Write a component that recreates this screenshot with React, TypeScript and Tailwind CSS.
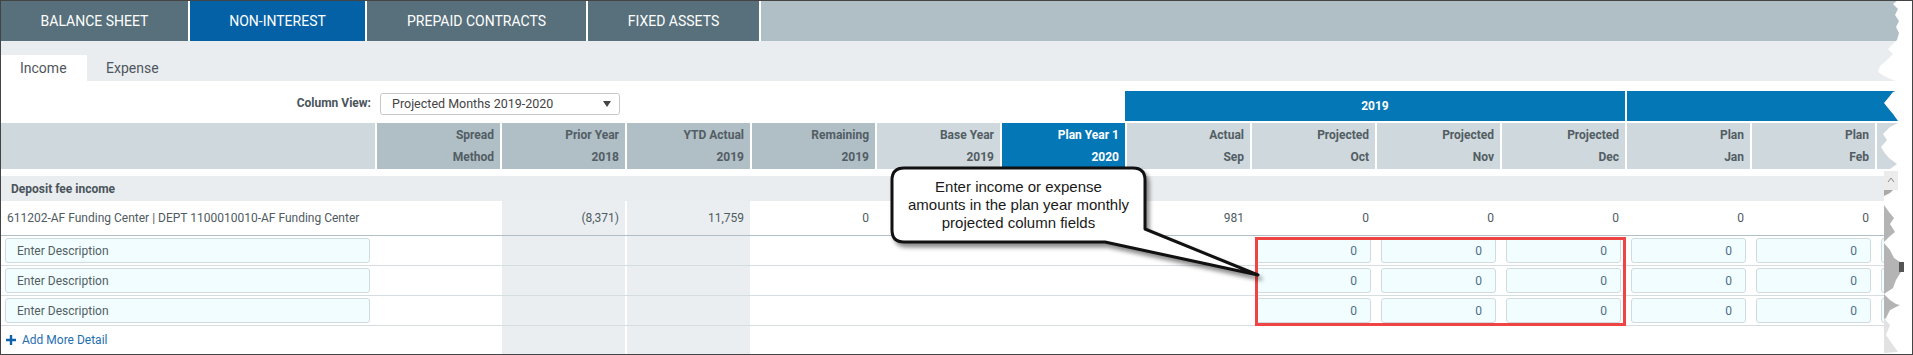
import React from 'react';

const grid = 'grid grid-cols-[374px_repeat(12,125px)_1fr]';

const heads = [
  { a: 'Spread', b: 'Method', cls: 'bg-[#b0bec5] text-[#525d64]' },
  { a: 'Prior Year', b: '2018', cls: 'bg-[#b0bec5] text-[#525d64]' },
  { a: 'YTD Actual', b: '2019', cls: 'bg-[#b0bec5] text-[#525d64]' },
  { a: 'Remaining', b: '2019', cls: 'bg-[#b0bec5] text-[#525d64]' },
  { a: 'Base Year', b: '2019', cls: 'bg-[#cfd8dc] text-[#525d64]' },
  { a: 'Plan Year 1', b: '2020', cls: 'bg-[#0477b6] text-white' },
  { a: 'Actual', b: 'Sep', cls: 'bg-[#cfd8dc] text-[#525d64]' },
  { a: 'Projected', b: 'Oct', cls: 'bg-[#cfd8dc] text-[#525d64]' },
  { a: 'Projected', b: 'Nov', cls: 'bg-[#cfd8dc] text-[#525d64]' },
  { a: 'Projected', b: 'Dec', cls: 'bg-[#cfd8dc] text-[#525d64]' },
  { a: 'Plan', b: 'Jan', cls: 'bg-[#cfd8dc] text-[#525d64]' },
  { a: 'Plan', b: 'Feb', cls: 'bg-[#cfd8dc] text-[#525d64]' },
];

const accountValues = ['', '(8,371)', '11,759', '0', '', '', '981', '0', '0', '0', '0', '0'];

// columns 1 and 2 (prior year, ytd actual) are shaded in the body
const shade = (i: number) => (i === 1 || i === 2 ? 'bg-[#eaeef0]' : 'bg-white');

const tabs = [
  { label: 'BALANCE SHEET', w: 'w-[187px]', bg: 'bg-[#57707b]' },
  { label: 'NON-INTEREST', w: 'w-[175px]', bg: 'bg-[#0561a6]' },
  { label: 'PREPAID CONTRACTS', w: 'w-[219px]', bg: 'bg-[#57707b]' },
  { label: 'FIXED ASSETS', w: 'w-[171px]', bg: 'bg-[#57707b]' },
];

function AmountInput() {
  return (
    <input
      readOnly
      defaultValue="0"
      className="mt-[2px] h-[25px] w-full rounded-[3px] border border-[#cfdbdf] bg-[#f1fdfe] pr-[13px] text-right text-[12px] text-[#4e6f88] outline-none"
    />
  );
}

function DetailRow() {
  return (
    <div className={`${grid} h-[30px] border-b border-[#d5dde0]`}>
      <div className="pl-[4px] pr-[4px]">
        <input
          readOnly
          defaultValue="Enter Description"
          className="mt-[2px] h-[25px] w-[365px] rounded-[3px] border border-[#cfdbdf] bg-[#f1fdfe] pl-[11px] text-[12px] text-[#525d64] outline-none"
        />
      </div>
      {heads.map((h, i) => (
        <div key={i} className={`border-l-2 border-white px-[4px] ${shade(i)}`}>
          {i >= 7 && <AmountInput />}
        </div>
      ))}
      <div className="border-l-2 border-white px-[4px]">
        <AmountInput />
      </div>
    </div>
  );
}

function TornEdge() {
  const edge =
    '1913,0 1898,0 1893,4 1898,9 1895,15 1899,21 1896,27 1899,33 1897,40 1893,44 1888,49 1893,54 1887,60 1880,66 1878,72 1884,76 1893,80 1898,82 1898,90 1893,92 1889,97 1884,103 1888,108 1893,114 1898,121 1898,123 1890,127 1883,134 1887,140 1881,147 1884,152 1889,158 1897,164 1890,169 1884,171 1884,355 1913,355';
  return (
    <svg
      className="pointer-events-none absolute inset-0"
      width={1911}
      height={353}
      viewBox="1 1 1911 353"
    >
      <polygon points={edge} fill="#ffffff" />
      <rect x={1884} y={171} width={14} height={19} fill="#ececec" />
      <path d="M1888 182 L1891 178 L1894 182" stroke="#8a8a8a" strokeWidth={1} fill="none" />
      <polygon points="1884,190 1893,190 1890,193 1884,196" fill="#a9a9a9" />
      <polygon points="1884,205 1889,212 1894,218 1890,224 1895,232 1889,237 1884,242" fill="#b4b4b4" />
      <polygon points="1884,243 1890,250 1894,258 1900,262 1904,266 1901,272 1896,280 1893,288 1884,294" fill="#b4b4b4" />
      <rect x={1899} y={262} width={5} height={10} fill="#555555" />
      <polygon points="1884,294 1890,300 1896,304 1900,305 1890,310 1886,318 1884,320" fill="#b4b4b4" />
      <polygon points="1884,318 1890,325 1886,335 1893,345 1898,352 1884,353" fill="#e2e2e2" />
    </svg>
  );
}

function Callout() {
  return (
    <>
      <svg
        className="pointer-events-none absolute inset-0 drop-shadow-[3px_4px_2px_rgba(0,0,0,0.45)]"
        width={1911}
        height={353}
        viewBox="1 1 1911 353"
      >
        <path
          d="M904 168 H1133 Q1145 168 1145 180 V229 L1258 275 L1105 242 H904 Q892 242 892 230 V180 Q892 168 904 168 Z"
          fill="#ffffff"
          stroke="#111111"
          strokeWidth={3}
          strokeLinejoin="round"
        />
      </svg>
      <div className="pointer-events-none absolute left-[891px] top-[177px] w-[253px] text-center font-['Liberation_Sans',Arial,sans-serif] text-[15px] leading-[18px] text-[#1a1a1a]">
        Enter income or expense
        <br />
        amounts in the plan year monthly
        <br />
        projected column fields
      </div>
    </>
  );
}

export default function App() {
  return (
    <div className="relative h-[355px] w-[1913px] overflow-hidden border border-[#444] bg-white font-['Roboto',sans-serif]">
      {/* top tabs */}
      <div className="flex h-[40px] gap-[2px] bg-white">
        {tabs.map((t) => (
          <div
            key={t.label}
            className={`${t.w} ${t.bg} flex items-center justify-center text-[14px] text-white`}
          >
            {t.label}
          </div>
        ))}
        <div className="flex-1 bg-[#b0bec5]" />
      </div>

      {/* income / expense */}
      <div className="flex h-[40px] items-end bg-[#e9edf0] text-[14px] text-[#4f565c]">
        <div className="flex h-[26px] w-[86px] items-center bg-white pl-[19px]">Income</div>
        <div className="flex h-[26px] items-center pl-[19px]">Expense</div>
      </div>

      {/* column view + year bands */}
      <div className={`${grid} h-[42px]`}>
        <div className="flex justify-end pr-[4px] pt-[14px] text-[12px] font-bold leading-[16px] text-[#4a545b]">
          Column View:
        </div>
        <div className="col-span-5 pl-[5px] pt-[12px]">
          <div className="flex h-[22px] w-[240px] items-center justify-between rounded-[3px] border border-[#c9c9c9] pl-[11px] pr-[8px] text-[12.5px] text-[#444]">
            <span>Projected Months 2019-2020</span>
            <svg width="8" height="6" viewBox="0 0 8 6">
              <path d="M0 0 H8 L4 6 Z" fill="#444" />
            </svg>
          </div>
        </div>
        <div />
        <div className="col-span-4 pt-[10px]">
          <div className="flex h-[30px] items-center justify-center bg-[#0477b6] text-[12px] font-bold text-white">
            2019
          </div>
        </div>
        <div className="col-span-3 pl-[2px] pt-[10px]">
          <div className="h-[30px] bg-[#0477b6]" />
        </div>
      </div>

      {/* column headers */}
      <div className={`${grid} h-[46px]`}>
        <div className="bg-[#cfd8dc]" />
        {heads.map((h, i) => (
          <div
            key={i}
            className={`flex flex-col items-end border-l-2 border-white pr-[6px] pt-[1px] text-[12px] font-bold leading-[22px] ${h.cls}`}
          >
            <span>{h.a}</span>
            <span>{h.b}</span>
          </div>
        ))}
        <div className="border-l-2 border-white bg-[#cfd8dc]" />
      </div>

      <div className="h-[7px]" />

      {/* group */}
      <div className="flex h-[25px] items-center bg-[#e9edf0] pl-[10px] text-[12px] font-bold text-[#4a545b]">
        Deposit fee income
      </div>

      {/* account row */}
      <div className={`${grid} h-[35px] border-b border-[#b0bec5] text-[12px] text-[#4f5b62]`}>
        <div className="flex items-center whitespace-nowrap pl-[6px]">
          611202-AF Funding Center | DEPT 1100010010-AF Funding Center
        </div>
        {accountValues.map((v, i) => (
          <div key={i} className={`flex items-center justify-end border-l-2 border-white pr-[6px] ${shade(i)}`}>
            {v}
          </div>
        ))}
        <div className="border-l-2 border-white" />
      </div>

      <DetailRow />
      <DetailRow />
      <DetailRow />

      {/* add more */}
      <div className={`${grid} h-[28px]`}>
        <div className="flex items-center gap-[6px] pl-[5px] text-[12px] text-[#1f6fb0]">
          <svg width="10" height="10" viewBox="0 0 10 10">
            <path d="M3.8 0 H6.2 V3.8 H10 V6.2 H6.2 V10 H3.8 V6.2 H0 V3.8 H3.8 Z" fill="#0d62a8" />
          </svg>
          <span>Add More Detail</span>
        </div>
        {heads.map((h, i) => (
          <div key={i} className={`border-l-2 border-white ${shade(i)}`} />
        ))}
        <div className="border-l-2 border-white" />
      </div>

      {/* highlight around projected fields */}
      <div className="pointer-events-none absolute left-[1254px] top-[236px] h-[89px] w-[371px] border-[3px] border-[#ef4444]" />

      <Callout />
      <TornEdge />
    </div>
  );
}
